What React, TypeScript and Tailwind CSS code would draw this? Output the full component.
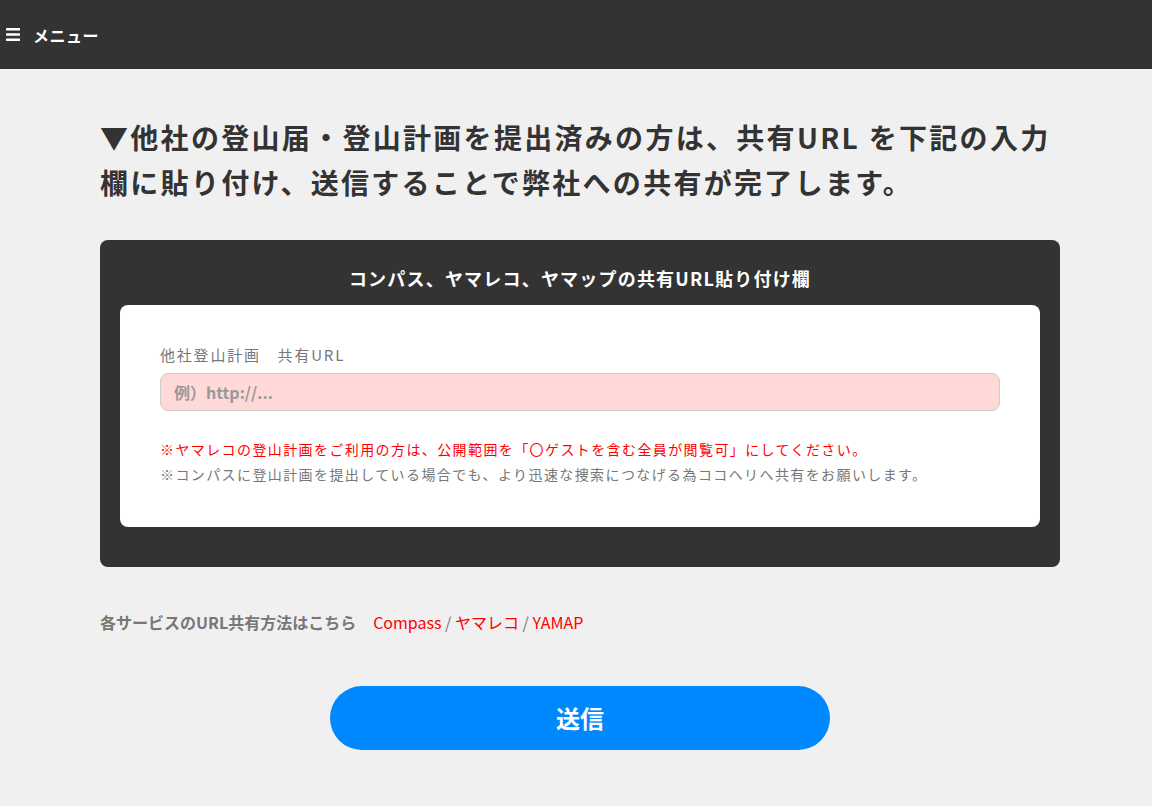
import React from "react";

const jp = { fontFamily: '"Noto Sans CJK JP", "Noto Sans", sans-serif' };

function MenuIcon() {
  return (
    <svg width="14" height="13" viewBox="0 0 14 13" fill="#fff">
      <rect x="0" y="0" width="14" height="2.6" rx="0.6" />
      <rect x="0" y="5.2" width="14" height="2.6" rx="0.6" />
      <rect x="0" y="10.4" width="14" height="2.6" rx="0.6" />
    </svg>
  );
}

export default function App() {
  return (
    <div className="min-h-screen bg-[#f0f0f0] text-[#333]" style={jp}>
      {/* header */}
      <header className="h-[69px] bg-[#333] flex items-center pl-[6px]">
        <MenuIcon />
        <span className="ml-[13px] text-white text-[16px] font-bold tracking-[0.5px]">
          メニュー
        </span>
      </header>

      <main className="w-[960px] ml-[100px] pt-[46px] pb-[55px]">
        <h1 className="text-[28px] leading-[45px] font-bold tracking-[2.3px] text-[#333] whitespace-nowrap">
          ▼他社の登山届・登山計画を提出済みの方は、共有URL を下記の入力
          <br />
          欄に貼り付け、送信することで弊社への共有が完了します。
        </h1>

        {/* share box */}
        <section className="mt-[35px] bg-[#333] rounded-lg px-5 pt-6 pb-10">
          <h2 className="text-center text-white text-[18px] leading-[28px] font-bold tracking-[1.2px] mb-[13px]">
            コンパス、ヤマレコ、ヤマップの共有URL貼り付け欄
          </h2>
          <div className="bg-white rounded-lg px-10 pt-[38px] pb-[40px]">
            <label className="block text-[15px] leading-6 text-[#777] tracking-[1.8px]">
              他社登山計画　共有URL
            </label>
            <input
              type="text"
              placeholder="例）http://..."
              className="mt-[6px] w-full h-[38px] rounded-lg border border-[#ccc] bg-[#ffd8d8] px-[13px] text-[16px] font-bold text-[#555] placeholder:text-[#999] outline-none"
            />
            <div className="mt-[26px] text-[14px] leading-[25px] tracking-[1.4px]">
              <p className="text-[#ff0000]">
                ※ヤマレコの登山計画をご利用の方は、公開範囲を「〇ゲストを含む全員が閲覧可」にしてください。
              </p>
              <p className="text-[#777]">
                ※コンパスに登山計画を提出している場合でも、より迅速な捜索につなげる為ココヘリへ共有をお願いします。
              </p>
            </div>
          </div>
        </section>

        {/* service links */}
        <p className="mt-[43px] text-[16px] leading-6 text-[#777]">
          <span className="font-bold">各サービスのURL共有方法はこちら</span>
          <a href="#" className="ml-[17px] text-[#ff0000]">Compass</a>
          <span> / </span>
          <a href="#" className="text-[#ff0000]">ヤマレコ</a>
          <span> / </span>
          <a href="#" className="text-[#ff0000]">YAMAP</a>
        </p>

        <div className="mt-[52px] flex justify-center">
          <button className="w-[500px] h-16 rounded-full bg-[#0088ff] text-white text-[24px] font-bold">
            送信
          </button>
        </div>
      </main>
    </div>
  );
}
